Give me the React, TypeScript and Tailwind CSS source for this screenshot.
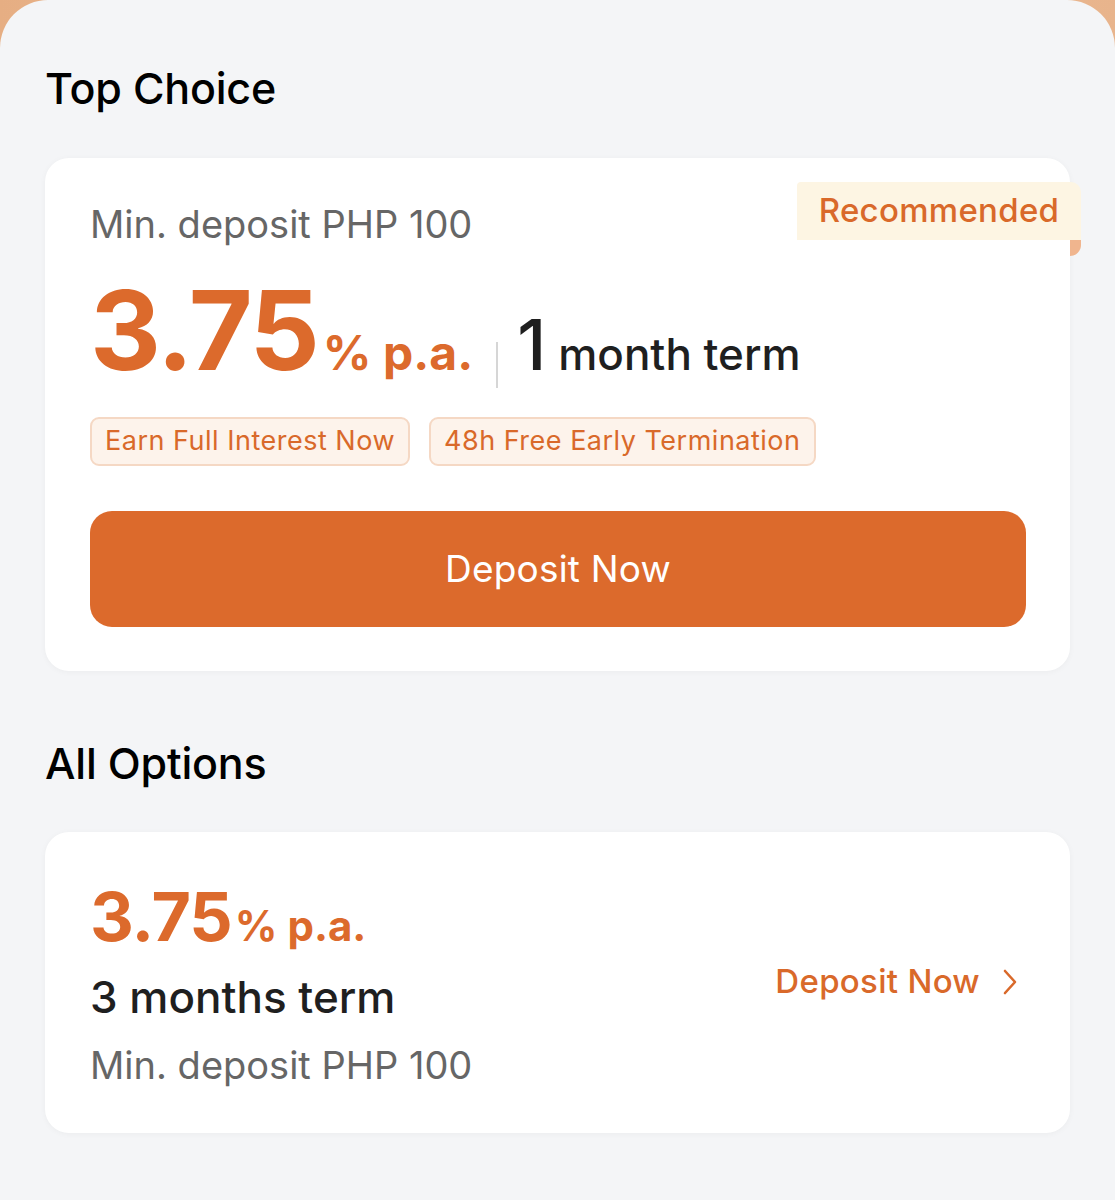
import React from "react";

function Chevron() {
  return (
    <svg width="16" height="30" viewBox="0 0 16 30" fill="none">
      <path d="M3 4 L13 15 L3 26" stroke="#d9692a" strokeWidth="2.6" strokeLinecap="round" strokeLinejoin="round" />
    </svg>
  );
}

export default function App() {
  return (
    <div className="w-[1115px] h-[1200px] overflow-hidden bg-[linear-gradient(90deg,#e6ae83,#f0c3a0_50%,#e8b48c)]" style={{ fontFamily: "Inter, 'Liberation Sans', sans-serif" }}>
      <div className="h-full rounded-t-[48px] bg-[#f4f5f7] px-[45px] pt-[62px]">
        <h2 className="text-[43px] leading-[52px] font-medium text-black tracking-[-0.2px]">Top Choice</h2>

        <div className="relative mt-[44px] rounded-[24px] bg-white pl-[45px] pr-[44px] pt-[44px] pb-[44px] shadow-[0_1px_6px_rgba(0,0,0,0.04)]">
          <div className="absolute right-[-11px] top-[24px]">
            <div className="h-[58px] w-[284px] rounded-tr-[10px] rounded-tl-[4px] bg-[#fdf5e3] flex items-center justify-center text-[33px] font-medium text-[#d9692a] tracking-[0.3px]">
              Recommended
            </div>
            <div className="absolute right-0 top-[58px] h-[16px] w-[11px] rounded-br-full bg-[#f0b58e]" />
          </div>

          <div className="text-[38px] leading-[44px] text-[#666666]">Min. deposit PHP 100</div>

          <div className="mt-[34px] flex items-baseline h-[100px]">
            <span className="text-[110px] leading-[100px] font-bold text-[#dc6a2c] tracking-[-2px]">3.75</span>
            <span className="ml-[5px] text-[48px] leading-[46px] font-bold text-[#dc6a2c]">% p.a.</span>
            <span className="ml-[23px] mr-[19px] h-[46px] w-[2px] bg-[#d6d6d6] self-end mb-[-8px]" />
            <span className="text-[70px] leading-[70px] font-medium text-[#1f1f1f]">1</span>
            <span className="ml-[12px] text-[44px] leading-[46px] font-medium text-[#1f1f1f]">month term</span>
          </div>

          <div className="mt-[37px] flex gap-[19px]">
            <span className="h-[49px] px-[13px] flex items-center rounded-[9px] border-2 border-[#f5d8c4] bg-[#fdf3eb] text-[27px] text-[#d9692a] tracking-[0.5px]">Earn Full Interest Now</span>
            <span className="h-[49px] px-[13px] flex items-center rounded-[9px] border-2 border-[#f5d8c4] bg-[#fdf3eb] text-[27px] text-[#d9692a] tracking-[0.5px]">48h Free Early Termination</span>
          </div>

          <button className="mt-[45px] h-[116px] w-full rounded-[22px] bg-[#dc6a2c] text-[37px] text-white flex items-center justify-center tracking-[0.2px]">
            Deposit Now
          </button>
        </div>

        <h2 className="mt-[66px] text-[43px] leading-[52px] font-medium text-black tracking-[-0.2px]">All Options</h2>

        <div className="mt-[43px] rounded-[24px] bg-white pl-[45px] pr-[52px] pt-[51px] pb-[46px] flex items-center justify-between shadow-[0_1px_6px_rgba(0,0,0,0.04)]">
          <div className="flex flex-col">
            <div className="flex items-end h-[66px]">
              <span className="text-[68px] leading-[66px] font-bold text-[#dc6a2c] tracking-[-1px]">3.75</span>
              <span className="ml-[3px] text-[42px] leading-[42px] font-bold text-[#dc6a2c] mb-[2px]">% p.a.</span>
            </div>
            <div className="mt-[22px] text-[44px] leading-[52px] font-medium text-[#1f1f1f]">3 months term</div>
            <div className="mt-[20px] text-[38px] leading-[44px] text-[#666666]">Min. deposit PHP 100</div>
          </div>
          <div className="flex items-center gap-[22px] mb-[6px]">
            <span className="text-[33px] font-medium text-[#d9692a] tracking-[0.3px]">Deposit Now</span>
            <Chevron />
          </div>
        </div>
      </div>
    </div>
  );
}
